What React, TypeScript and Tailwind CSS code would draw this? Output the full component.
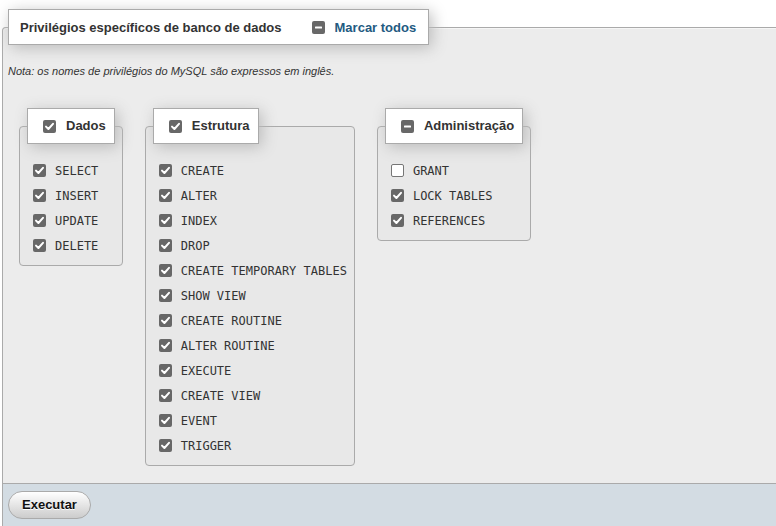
import React from "react";

type Priv = { name: string; checked: boolean };

const dados: Priv[] = ["SELECT", "INSERT", "UPDATE", "DELETE"].map((n) => ({ name: n, checked: true }));

const estrutura: Priv[] = [
  "CREATE",
  "ALTER",
  "INDEX",
  "DROP",
  "CREATE TEMPORARY TABLES",
  "SHOW VIEW",
  "CREATE ROUTINE",
  "ALTER ROUTINE",
  "EXECUTE",
  "CREATE VIEW",
  "EVENT",
  "TRIGGER",
].map((n) => ({ name: n, checked: true }));

const admin: Priv[] = [
  { name: "GRANT", checked: false },
  { name: "LOCK TABLES", checked: true },
  { name: "REFERENCES", checked: true },
];

function Box({ state }: { state: "on" | "off" | "mixed" }) {
  if (state === "off") {
    return <span className="block w-[13px] h-[13px] shrink-0 rounded-[2px] border border-[#767676] bg-white" />;
  }
  return (
    <span className="flex w-[13px] h-[13px] shrink-0 rounded-[2px] bg-[#686868]">
      <svg width="13" height="13" viewBox="0 0 13 13">
        {state === "on" ? (
          <polyline points="3,6.6 5.4,9 10,3.8" fill="none" stroke="#fff" strokeWidth="2" strokeLinecap="round" strokeLinejoin="round" />
        ) : (
          <rect x="3" y="5.5" width="7" height="2" rx="0.5" fill="#fff" />
        )}
      </svg>
    </span>
  );
}

function Group({ title, state, items }: { title: string; state: "on" | "mixed"; items: Priv[] }) {
  return (
    <fieldset className="mx-[11px] border border-[#aaa] rounded-[4px] bg-[#e8e8e8] px-[7px] pb-[7px]">
      <legend className="border border-[#aaa] bg-white shadow-[3px_3px_15px_#bbb] pl-[15px] pr-[8px]">
        <div className="flex h-[34px] items-center">
          <Box state={state} />
          <span className="ml-[10px] text-[13px] font-bold text-[#333]">{title}</span>
        </div>
      </legend>
      <div className="pl-[6px] pt-[14px]">
        {items.map((p) => (
          <div key={p.name} className="flex h-[25px] items-center">
            <Box state={p.checked ? "on" : "off"} />
            <span className="ml-[9px] whitespace-pre font-['DejaVu_Sans_Mono',monospace] text-[12px] text-[#333]">
              {p.name}
            </span>
          </div>
        ))}
      </div>
    </fieldset>
  );
}

export default function App() {
  return (
    <div className="w-[776px] h-[526px] overflow-hidden bg-white font-['Liberation_Sans',Arial,sans-serif]">
      <fieldset className="ml-[2px] mt-[9px] w-[800px] border border-b-0 border-[#aaa] rounded-t-[4px] bg-[#ececec] px-[5px] pb-[17px] shadow-[inset_0_1px_0_#f6f6f6]">
        <legend className="border border-[#aaa] bg-white shadow-[3px_3px_15px_#bbb] pl-[11px] pr-[12px]">
          <div className="flex h-[34px] items-center pt-[1px] text-[13px] font-bold">
            <span className="text-[#333]">Privilégios específicos de banco de dados</span>
            <span className="ml-[30px]">
              <Box state="mixed" />
            </span>
            <a className="ml-[10px] text-[#235a81]">Marcar todos</a>
          </div>
        </legend>
        <p className="mt-[19px] text-[11px] italic leading-[14px] text-[#333]">
          Nota: os nomes de privilégios do MySQL são expressos em inglês.
        </p>
        <div className="mt-[30px] flex items-start">
          <Group title="Dados" state="on" items={dados} />
          <Group title="Estrutura" state="on" items={estrutura} />
          <Group title="Administração" state="mixed" items={admin} />
        </div>
      </fieldset>
      <div className="ml-[2px] w-[800px] border-l border-t border-[#aaa] bg-[#d3dce3] px-[5px] py-[7px]">
        <button className="h-[28px] rounded-[20px] border border-[#aaa] bg-gradient-to-b from-white to-[#cccccc] px-[13px] text-[13px] font-bold text-[#111] [text-shadow:0_1px_0_#fff]">
          Executar
        </button>
      </div>
    </div>
  );
}
